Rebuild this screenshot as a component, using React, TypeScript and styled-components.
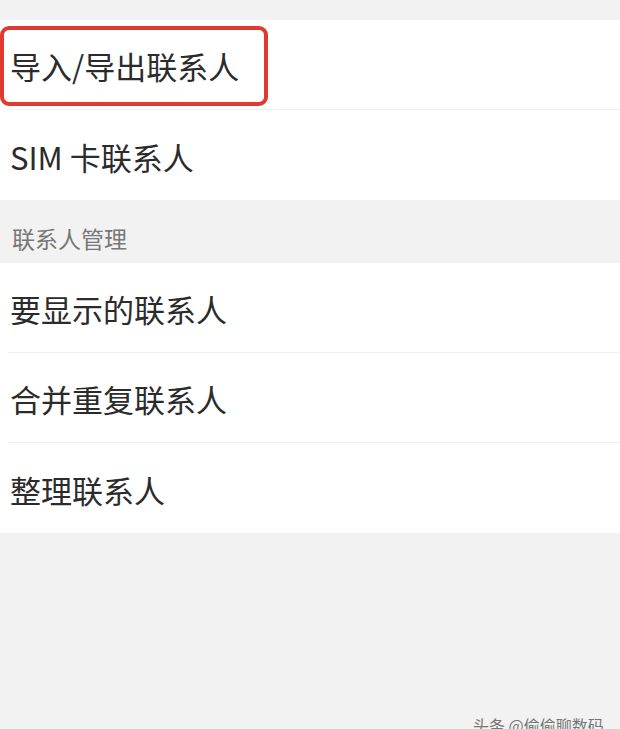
import styled, { createGlobalStyle } from "styled-components";

const GlobalStyle = createGlobalStyle`
  html, body {
    margin: 0;
    padding: 0;
    background: #f2f2f2;
  }
  body {
    font-family: "Noto Sans CJK SC", "Noto Sans", sans-serif;
  }
`;

const Page = styled.div`
  position: relative;
  width: 620px;
  height: 729px;
  overflow: hidden;
  background: #f2f2f2;
  padding-top: 20px;
  box-sizing: border-box;
`;

const Card = styled.div`
  background: #fff;
  display: flex;
  flex-direction: column;
`;

const Row = styled.div<{ $last?: boolean }>`
  position: relative;
  height: 90px;
  box-sizing: border-box;
  display: flex;
  align-items: center;
  padding-top: 2px;
  font-size: 31px;
  color: #2b2b2b;
  border-bottom: ${(p) => (p.$last ? "none" : "1px solid #f0f0f0")};
  margin-left: ${(p) => (p.$last ? "0" : "8px")};
  padding-left: ${(p) => (p.$last ? "10px" : "2px")};
`;

const Highlight = styled.span`
  position: absolute;
  left: -8px;
  top: 6px;
  width: 268px;
  height: 80px;
  border: 4px solid #e03a2f;
  border-radius: 9px;
  box-sizing: border-box;
`;

const SectionHeader = styled.div`
  height: 63px;
  display: flex;
  align-items: flex-end;
  padding: 0 0 8px 12px;
  box-sizing: border-box;
  font-size: 23px;
  color: #777;
`;

const Watermark = styled.div`
  position: absolute;
  left: 473px;
  bottom: -8px;
  font-size: 16px;
  color: #777;
  white-space: nowrap;
`;

const topItems = ["导入/导出联系人", "SIM 卡联系人"];
const manageItems = ["要显示的联系人", "合并重复联系人", "整理联系人"];

export default function App() {
  return (
    <>
      <GlobalStyle />
      <Page>
        <Card>
          {topItems.map((t, i) => (
            <Row key={t} $last={i === topItems.length - 1}>
              {i === 0 && <Highlight />}
              {t}
            </Row>
          ))}
        </Card>
        <SectionHeader>联系人管理</SectionHeader>
        <Card>
          {manageItems.map((t, i) => (
            <Row key={t} $last={i === manageItems.length - 1}>
              {t}
            </Row>
          ))}
        </Card>
        <Watermark>头条 @偷偷聊数码</Watermark>
      </Page>
    </>
  );
}
